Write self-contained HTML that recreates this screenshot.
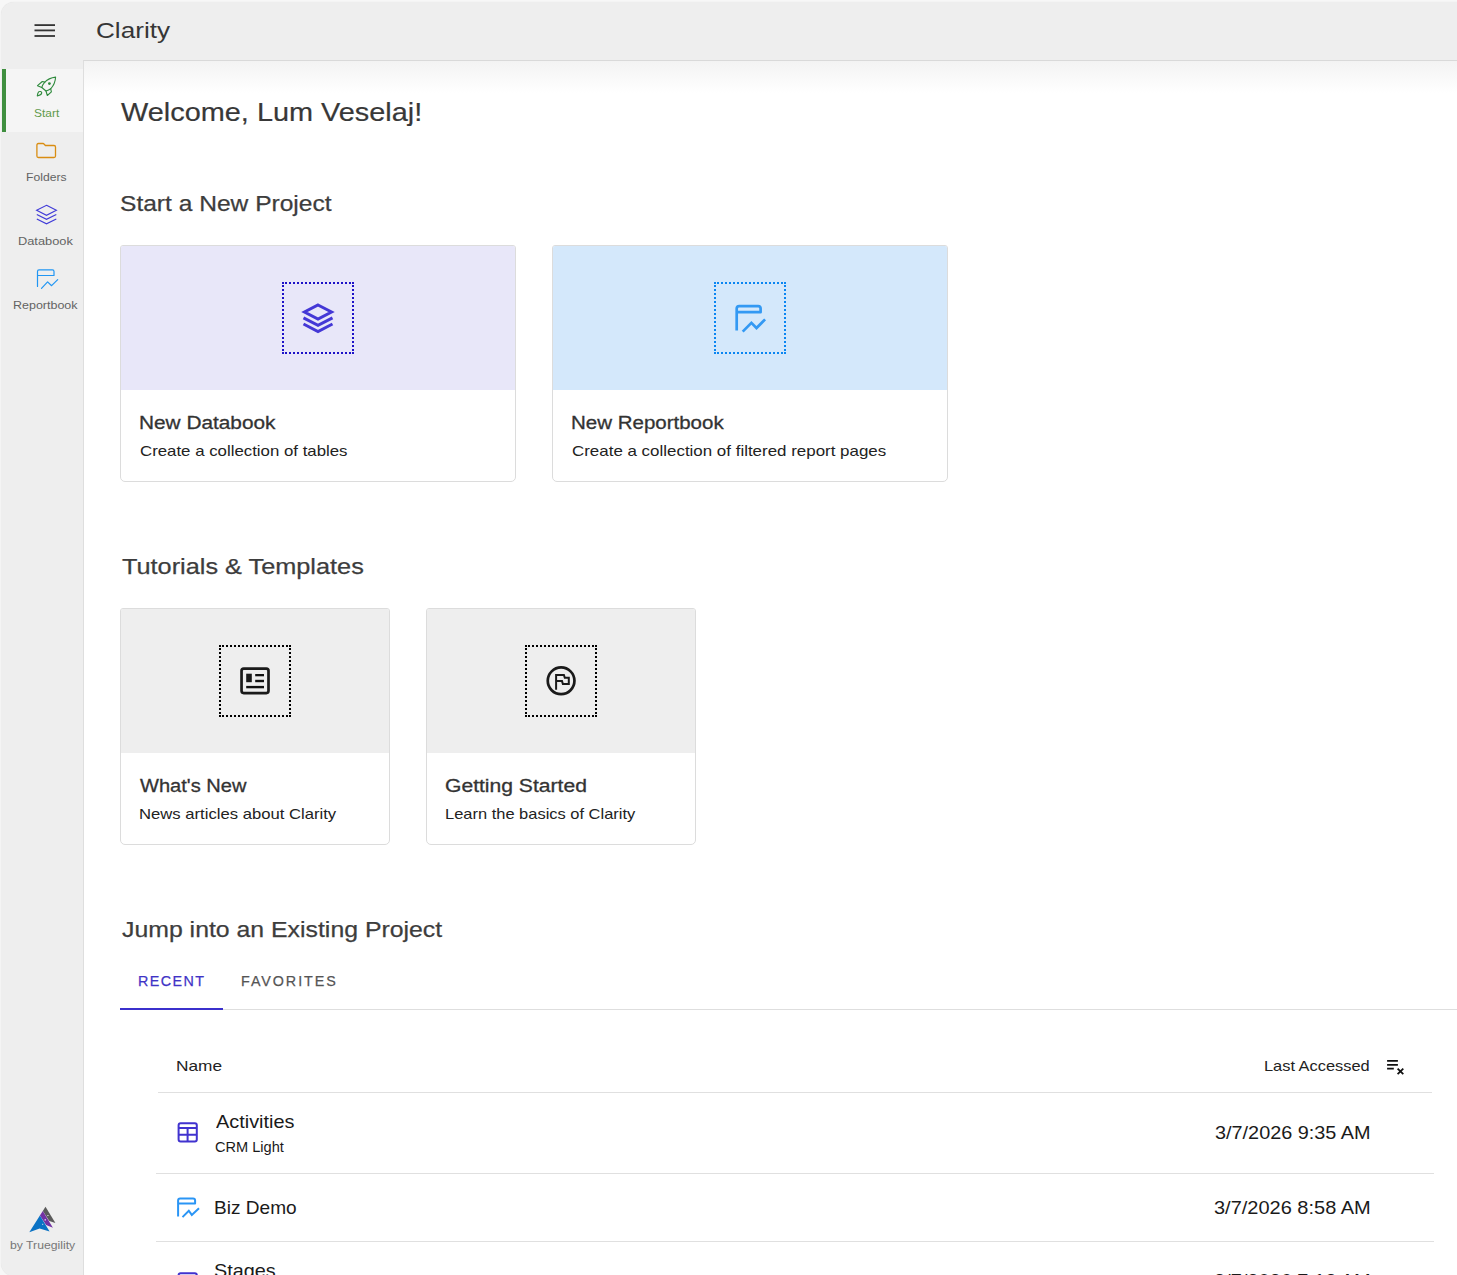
<!DOCTYPE html>
<html><head><meta charset="utf-8">
<style>
*{box-sizing:border-box;margin:0;padding:0}
html,body{width:1457px;height:1275px;overflow:hidden;background:#f7f7f7;font-family:"Liberation Sans",sans-serif;color:#333;position:relative}
.abs{position:absolute}
svg{position:absolute;overflow:visible}
#app{position:absolute;left:1px;top:2px;width:1470px;height:1274px;background:#eeeeee;border-radius:13px;box-shadow:0 0 1px rgba(0,0,0,0.12)}
#main{position:absolute;left:83px;top:60px;width:1380px;height:1220px;background:#fff;border-top:1px solid #d9d9d9;border-left:1px solid #dedede}
#shade{position:absolute;left:0;top:0;right:0;height:32px;background:linear-gradient(#f3f3f3,#fff)}
.t{position:absolute;white-space:nowrap;line-height:1;transform-origin:0 0}
.card{position:absolute;border:1px solid #dcdcdc;border-radius:3px 3px 5px 5px;background:#fff;overflow:hidden}
.card .img{position:absolute;left:0;top:0;right:0;height:144px}
.focus{position:absolute;width:72px;height:72px;border:2px dotted #1515d6}
.hl{position:absolute;height:1px;background:#e0e0e0}
</style></head><body>
<div id="app"></div>
<!-- sidebar active -->
<div class="abs" style="left:2px;top:69px;width:81px;height:63px;background:#f5f5f5"></div>
<div class="abs" style="left:2px;top:69px;width:4px;height:63px;background:#3f8f3f"></div>
<div id="main"><div id="shade"></div></div>

<!-- hamburger -->


<!-- cards -->
<div class="card" style="left:120px;top:245px;width:396px;height:237px"><div class="img" style="background:#e8e7f9"></div></div>
<div class="card" style="left:552px;top:245px;width:396px;height:237px"><div class="img" style="background:#d4e8fb"></div></div>
<div class="card" style="left:120px;top:608px;width:270px;height:237px"><div class="img" style="background:#eeeeee"></div></div>
<div class="card" style="left:426px;top:608px;width:270px;height:237px"><div class="img" style="background:#eeeeee"></div></div>

<div class="focus" style="left:282px;top:282px;border-color:#1c12c8"></div>
<div class="focus" style="left:714px;top:282px;border-color:#0a86f2"></div>
<div class="focus" style="left:219px;top:645px;border-color:#000"></div>
<div class="focus" style="left:525px;top:645px;border-color:#000"></div>

<!-- tabs -->
<div class="hl" style="left:120px;top:1009px;width:1337px;background:#dedede"></div>
<div class="abs" style="left:120px;top:1008px;width:103px;height:2px;background:#3b30cc"></div>

<!-- table lines -->
<div class="hl" style="left:158px;top:1092px;width:1274px"></div>
<div class="hl" style="left:156px;top:1173px;width:1278px"></div>
<div class="hl" style="left:156px;top:1241px;width:1278px"></div>


<svg width="1457" height="1275" style="left:0;top:0" viewBox="0 0 1457 1275">
 <!-- hamburger -->
 <g fill="#333"><rect x="34.5" y="24.2" width="20.5" height="1.8"/><rect x="34.5" y="29.5" width="20.5" height="1.8"/><rect x="34.5" y="35.1" width="20.5" height="1.8"/></g>
 <!-- rocket -->
 <g transform="translate(32,72.2)" fill="none" stroke="#2e8a3c" stroke-width="1.1" stroke-linejoin="round" stroke-linecap="round">
  <path d="M23.6,4.9 C19.5,5.3 15,7.5 12.2,10.6 C10.6,12.4 10.2,14 9.8,15.3 L14,18.8 C15.5,18.3 17.2,17.6 18.7,16.6 C21.2,14 23.4,9.5 23.6,4.9 Z"/>
  <path d="M12.8,9.9 L10.3,9.3 L5.5,13.5 L9.8,15.3"/>
  <path d="M18.7,16.6 L19.4,19.6 L15.3,23.3 L14,18.8"/>
  <path d="M5.3,23.7 C5.5,22 5.9,20.5 6.6,19.7 C7.6,19 9.4,19.3 9.7,20.3 C9.9,21.5 8.6,22.9 5.3,23.7 Z"/>
  <circle cx="17.4" cy="11.4" r="1.4" fill="#2e8a3c" stroke="none"/>
 </g>
 <!-- folder -->
 <g transform="translate(32,138)" fill="none" stroke="#d98d12" stroke-width="1.3" stroke-linejoin="round">
  <path d="M4.9,7 Q4.9,5.5 6.4,5.5 L11,5.5 Q11.6,5.5 12,6 L13.4,7.5 L22,7.5 Q23.5,7.5 23.5,9 L23.5,18 Q23.5,19.5 22,19.5 L6.4,19.5 Q4.9,19.5 4.9,18 Z"/>
 </g>
 <!-- sidebar layers -->
 <g transform="translate(32,200)" fill="none" stroke="#3f3ad8" stroke-width="1.1" stroke-linejoin="miter">
  <path d="M14.5,5.3 L24.4,10.3 L14.5,15.3 L4.6,10.3 Z"/>
  <path d="M4.8,14.5 L14.5,19.3 L24.3,14.5"/>
  <path d="M4.8,19.1 L14.5,23.8 L24.3,19.1"/>
 </g>
 <!-- sidebar report -->
 <g transform="translate(32,265)" fill="none" stroke="#2196f3" stroke-width="1.2" stroke-linejoin="round" stroke-linecap="round">
  <path d="M5.5,21.5 L5.5,6.4 Q5.5,4.9 7,4.9 L20.5,4.9 Q22,4.9 22,6.4 L22,10.5 L5.5,10.5"/>
  <path d="M9.5,23.3 L15.6,16.9 L19.6,20.7 L25.7,14.6"/>
 </g>
 <!-- logo -->
 <g transform="translate(26,1203)">
  <path d="M19.5,3.8 L29.4,20.1 L23.3,18 L16.8,8 Z" fill="#5a5a5a"/>
  <path d="M16.8,8 L26.9,24.7 L20.1,22.1 L13.9,12.6 Z" fill="#7232a3"/>
  <path d="M13.9,12.6 L23.6,28.6 L13.6,25.4 L3.3,29.2 Z" fill="#0a72c4"/>
  <rect x="21.2" y="12.2" width="1.4" height="0.8" fill="#eee"/>
  <rect x="18.6" y="16.2" width="1.3" height="1.3" fill="#eee"/>
  <rect x="16.2" y="20.8" width="1" height="1" fill="#eee"/>
 </g>
 <!-- big layers -->
 <g fill="none" stroke="#4438d6" stroke-width="3" stroke-linejoin="miter">
  <path d="M318,305 L331.5,312 L318,319 L304.5,312 Z"/>
  <path d="M303.5,317.8 L318,325.3 L332.5,317.8"/>
  <path d="M303.5,324 L318,331.5 L332.5,324"/>
 </g>
 <!-- big report -->
 <g fill="none" stroke="#3399f3" stroke-width="2.7" stroke-linejoin="round">
  <path d="M736.7,330.4 L736.7,308.6 Q736.7,306.1 739.2,306.1 L758.1,306.1 Q760.6,306.1 760.6,308.6 L760.6,312.2 L736.7,312.2"/>
  <path d="M742.7,331.6 L751.4,322.9 L756.5,328 L765.1,319.4" stroke-linejoin="miter"/>
 </g>
 <!-- what's new -->
 <g transform="translate(236,663)">
  <rect x="5.55" y="5.55" width="26.95" height="24.5" rx="2.2" fill="none" stroke="#1a1a1a" stroke-width="2.7"/>
  <rect x="10.2" y="10.7" width="5.6" height="8.5" fill="#1a1a1a"/>
  <rect x="19.2" y="11" width="8.8" height="2.3" fill="#111"/>
  <rect x="19.2" y="16.8" width="8.8" height="2.4" fill="#111"/>
  <rect x="10.2" y="22.9" width="17.8" height="2.4" fill="#111"/>
 </g>
 <!-- getting started -->
 <g transform="translate(543,663)" fill="none" stroke="#1a1a1a">
  <circle cx="18.1" cy="17.8" r="13.35" stroke-width="2.7"/>
  <path d="M13.1,26.8 V11.9 H20.9 L21.8,14.7 H25.8 V21 H19.9 L19,18.1 H13.1" stroke-width="2"/>
 </g>
 <!-- table icon -->
 <g transform="translate(172,1117)" fill="none" stroke="#4133cf" stroke-width="2">
  <rect x="6.6" y="6.3" width="18.2" height="18.2" rx="2"/>
  <path d="M6.6,10.9 H24.8 M6.6,17.8 H24.8 M15.6,10.9 V24.5"/>
 </g>
 <!-- report row icon -->
 <g fill="none" stroke="#2a95f5" stroke-width="2" stroke-linejoin="round">
  <path d="M178.1,1216.6 L178.1,1200.4 Q178.1,1198.4 180.1,1198.4 L193.1,1198.4 Q195.1,1198.4 195.1,1200.4 L195.1,1203.4 L178.1,1203.4"/>
  <path d="M182.5,1217.1 L188.8,1210.7 L191.8,1214.9 L199,1208.3" stroke-linejoin="miter"/>
 </g>
 <!-- stages table icon (cut) -->
 <g transform="translate(172,1266)" fill="none" stroke="#4133cf" stroke-width="2">
  <rect x="6.6" y="7.3" width="18.2" height="18.2" rx="2"/>
 </g>
 <!-- clear sort -->
 <g transform="translate(1382,1054)" stroke="#111" stroke-width="1.8" fill="none">
  <path d="M5.1,6.8 H15.9 M5.1,10.8 H15.9 M5.1,14.6 H11.8"/>
  <path d="M15.6,14.6 L21.3,20.1 M21.3,14.6 L15.6,20.1"/>
 </g>
</svg>

<div class="t" style="top:20px;font-size:22.2px;color:#363636;left:95.82px;transform:scaleX(1.1774);">Clarity</div>
<div class="t" style="top:99px;font-size:26.09px;color:#383838;-webkit-text-stroke:0.2px #383838;left:121.00px;transform:scaleX(1.1074);">Welcome, Lum Veselaj!</div>
<div class="t" style="top:192px;font-size:22.9px;color:#3d3d3d;-webkit-text-stroke:0.25px #3d3d3d;left:119.63px;transform:scaleX(1.0730);">Start a New Project</div>
<div class="t" style="top:414px;font-size:18.8px;color:#333;-webkit-text-stroke:0.3px #333;left:138.69px;transform:scaleX(1.1074);">New Databook</div>
<div class="t" style="top:444px;font-size:14.4px;color:#222;left:139.80px;transform:scaleX(1.1685);">Create a collection of tables</div>
<div class="t" style="top:414px;font-size:18.8px;color:#333;-webkit-text-stroke:0.3px #333;left:570.61px;transform:scaleX(1.0914);">New Reportbook</div>
<div class="t" style="top:444px;font-size:14.4px;color:#222;left:571.70px;transform:scaleX(1.1760);">Create a collection of filtered report pages</div>
<div class="t" style="top:555px;font-size:22.9px;color:#3d3d3d;-webkit-text-stroke:0.25px #3d3d3d;left:121.50px;transform:scaleX(1.1050);">Tutorials &amp; Templates</div>
<div class="t" style="top:777px;font-size:18.8px;color:#333;-webkit-text-stroke:0.3px #333;left:139.80px;transform:scaleX(1.0680);">What's New</div>
<div class="t" style="top:807px;font-size:14.4px;color:#222;left:138.64px;transform:scaleX(1.1576);">News articles about Clarity</div>
<div class="t" style="top:777px;font-size:18.8px;color:#333;-webkit-text-stroke:0.3px #333;left:444.68px;transform:scaleX(1.1232);">Getting Started</div>
<div class="t" style="top:807px;font-size:14.4px;color:#222;left:444.66px;transform:scaleX(1.1434);">Learn the basics of Clarity</div>
<div class="t" style="top:918px;font-size:22.9px;color:#3d3d3d;-webkit-text-stroke:0.25px #3d3d3d;left:121.50px;transform:scaleX(1.0847);">Jump into an Existing Project</div>
<div class="t" style="top:973px;font-size:15.4px;color:#3f33c6;-webkit-text-stroke:0.25px #3f33c6;left:137.87px;letter-spacing:1.557px;transform:scaleX(0.93);">RECENT</div>
<div class="t" style="top:973px;font-size:15.4px;color:#555;-webkit-text-stroke:0.25px #555;left:240.77px;letter-spacing:2.081px;transform:scaleX(0.93);">FAVORITES</div>
<div class="t" style="top:1059px;font-size:14.8px;color:#222;left:175.83px;transform:scaleX(1.1658);">Name</div>
<div class="t" style="top:1059px;font-size:14.8px;color:#222;left:1264.49px;transform:scaleX(1.1074);">Last Accessed</div>
<div class="t" style="top:1113px;font-size:18.2px;color:#1a1a1a;left:215.50px;transform:scaleX(1.0931);">Activities</div>
<div class="t" style="top:1141px;font-size:13.9px;color:#1a1a1a;left:214.90px;transform:scaleX(1.0485);">CRM Light</div>
<div class="t" style="top:1124px;font-size:18.6px;color:#1a1a1a;left:1214.93px;transform:scaleX(1.0674);">3/7/2026 9:35 AM</div>
<div class="t" style="top:1199px;font-size:18.2px;color:#1a1a1a;left:214.45px;transform:scaleX(1.0481);">Biz Demo</div>
<div class="t" style="top:1199px;font-size:18.6px;color:#1a1a1a;left:1214.12px;transform:scaleX(1.0750);">3/7/2026 8:58 AM</div>
<div class="t" style="top:1262px;font-size:18.2px;color:#1a1a1a;left:214.41px;transform:scaleX(1.0909);">Stages</div>
<div class="t" style="top:1272px;font-size:18.6px;color:#1a1a1a;left:1214.12px;transform:scaleX(1.0750);">3/7/2026 7:12 AM</div>
<div class="t" style="top:108px;font-size:11.2px;color:#5f9a4c;left:33.70px;transform:scaleX(1.0667);">Start</div>
<div class="t" style="top:172px;font-size:11.2px;color:#636363;left:25.71px;transform:scaleX(1.0861);">Folders</div>
<div class="t" style="top:236px;font-size:11.2px;color:#636363;left:18.46px;transform:scaleX(1.1447);">Databook</div>
<div class="t" style="top:300px;font-size:11.2px;color:#636363;left:13.48px;transform:scaleX(1.1158);">Reportbook</div>
<div class="t" style="top:1239px;font-size:11.7px;color:#777;left:9.70px;transform:scaleX(1.0460);">by Truegility</div>
</body></html>
